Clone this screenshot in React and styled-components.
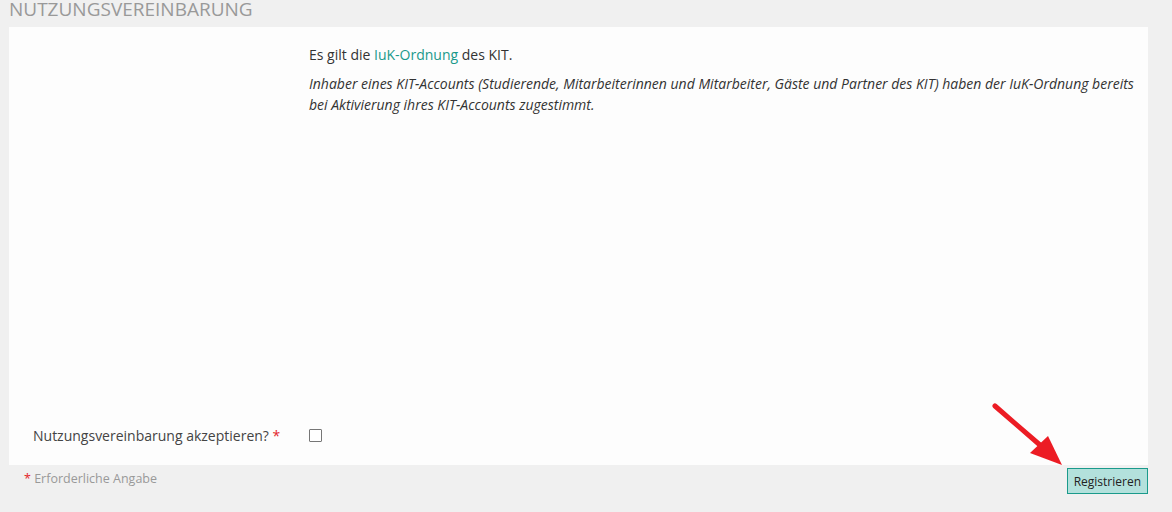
import styled, { createGlobalStyle } from "styled-components";

const GlobalStyle = createGlobalStyle`
  html, body {
    margin: 0;
    padding: 0;
    background: #f0f0f0;
  }
  body {
    font-family: "Open Sans", "DejaVu Sans", sans-serif;
    color: #333;
  }
`;

const Page = styled.div`
  position: relative;
  width: 1172px;
  height: 512px;
  box-sizing: border-box;
  padding: 0 24px 0 9px;
  overflow: hidden;
`;

const Heading = styled.h2`
  margin: 0 0 8px;
  font-size: 19px;
  font-weight: 400;
  line-height: 19px;
  color: #999;
  text-transform: uppercase;
`;

const Panel = styled.div`
  background: #fdfdfd;
  height: 438px;
  box-sizing: border-box;
  padding: 17px 0 19px;
  display: flex;
  flex-direction: column;
`;

const Row = styled.div`
  display: grid;
  grid-template-columns: 300px 1fr;
  margin-top: ${(p) => (p.$bottom ? "auto" : "0")};
  align-items: ${(p) => (p.$bottom ? "center" : "start")};
`;

const Label = styled.div`
  padding-left: 24px;
  font-size: 14px;
  line-height: 21px;
  color: #444;
`;

const Content = styled.div`
  padding-right: 0;
  font-size: 14px;
  line-height: 21px;
`;

const Para = styled.p`
  margin: 0 0 8px;
  font-style: ${(p) => (p.$italic ? "italic" : "normal")};
`;

const Link = styled.a`
  color: #1a998b;
  text-decoration: none;
`;

const Req = styled.span`
  color: #e3262b;
`;

const Check = styled.span`
  display: block;
  width: 11px;
  height: 11px;
  border: 1px solid #767676;
  border-radius: 1px;
  background: #fff;
`;

const Footer = styled.div`
  display: flex;
  justify-content: space-between;
  align-items: flex-start;
  padding-top: 3px;
`;

const Note = styled.div`
  padding: 1px 0 0 15px;
  font-size: 12.5px;
  line-height: 20px;
  color: #999;
`;

const Button = styled.button`
  height: 26px;
  padding: 0 6px;
  font-family: "Open Sans", "DejaVu Sans", sans-serif;
  font-size: 12px;
  color: #222;
  background: #b3e1dc;
  border: 1px solid #1a9a8b;
  border-radius: 0;
`;

const Arrow = styled.svg`
  position: absolute;
  left: 985px;
  top: 395px;
`;

export default function App() {
  return (
    <Page>
      <GlobalStyle />
      <Heading>Nutzungsvereinbarung</Heading>
      <Panel>
        <Row>
          <div />
          <Content>
            <Para>
              Es gilt die <Link href="#">IuK-Ordnung</Link> des KIT.
            </Para>
            <Para $italic>
              Inhaber eines KIT-Accounts (Studierende, Mitarbeiterinnen und
              Mitarbeiter, Gäste und Partner des KIT) haben der IuK-Ordnung
              bereits bei Aktivierung ihres KIT-Accounts zugestimmt.
            </Para>
          </Content>
        </Row>
        <Row $bottom>
          <Label>
            Nutzungsvereinbarung akzeptieren? <Req>*</Req>
          </Label>
          <Content>
            <Check />
          </Content>
        </Row>
      </Panel>
      <Footer>
        <Note>
          <Req>*</Req> Erforderliche Angabe
        </Note>
        <Button>Registrieren</Button>
      </Footer>
      <Arrow width="90" height="80" viewBox="0 0 90 80">
        <line x1="10" y1="11" x2="55" y2="50" stroke="#ec1c24" strokeWidth="5" strokeLinecap="round" />
        <polygon points="45,58 63,41 77,70" fill="#ec1c24" />
      </Arrow>
    </Page>
  );
}
